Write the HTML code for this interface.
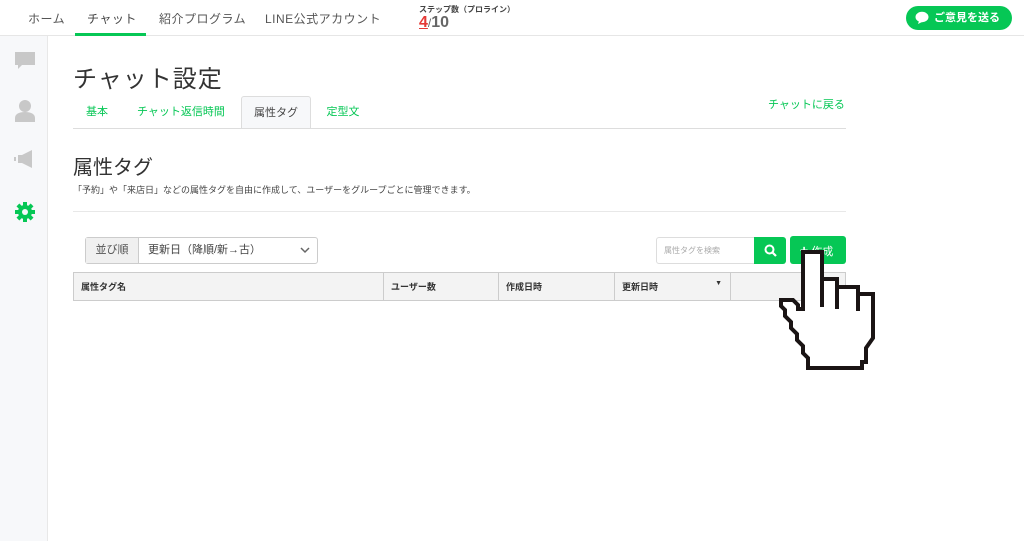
<!DOCTYPE html>
<html><head><meta charset="utf-8"><style>
*{box-sizing:border-box;margin:0;padding:0}
body{width:1024px;height:541px;overflow:hidden;background:#fff;font-family:"Liberation Sans","Noto Sans CJK JP",sans-serif;color:#333;position:relative}
.top{position:absolute;left:0;top:0;width:1024px;height:36px;border-bottom:1px solid #e6e6e6;background:#fff}
.nav{position:absolute;top:10px;font-size:12px;color:#555;letter-spacing:0.5px}
.side{position:absolute;left:0;top:36px;width:48px;height:505px;background:#f7f8fa;border-right:1px solid #e8e8e8}
.abs{position:absolute}
.tab{position:absolute;top:96px;height:33px;font-size:11px;color:#06c755;line-height:33px;text-align:center}
th{font-size:9px;font-weight:bold;text-align:left;padding-left:7px;border:1px solid #ccc;background:#f3f3f3;height:28px}
</style></head><body>
<div class="top">
<div class="nav" style="left:28px">ホーム</div>
<div class="nav" style="left:87px;color:#444">チャット</div>
<div class="abs" style="left:75px;top:33px;width:71px;height:3px;background:#06c755"></div>
<div class="nav" style="left:159px">紹介プログラム</div>
<div class="nav" style="left:265px">LINE公式アカウント</div>
<div class="abs" style="left:419px;top:4px;font-size:8px;font-weight:bold;color:#444">ステップ数（プロライン）</div>
<div class="abs" style="left:419px;top:14px;font-size:16px;font-weight:bold;color:#666"><span style="color:#e53935;text-decoration:underline">4</span><span style="font-weight:normal;font-size:12px">/</span>10</div>
<div class="abs" style="left:906px;top:6px;width:106px;height:24px;border-radius:12px;background:#06c755;color:#fff;font-size:11px;font-weight:bold;line-height:24px;padding-left:28px">ご意見を送る
<svg class="abs" style="left:9px;top:5px" width="14" height="14" viewBox="0 0 14 14"><ellipse cx="7" cy="6" rx="6.5" ry="5.2" fill="#fff"/><path d="M4 10l-1 3 4-2z" fill="#fff"/></svg></div>
</div>
<div class="side">
<svg class="abs" style="left:15px;top:16px" width="20" height="18" viewBox="0 0 20 18"><path d="M0 0h20v13H7l-4 4v-4H0z" fill="#c8c8c8"/></svg>
<svg class="abs" style="left:15px;top:64px" width="20" height="22" viewBox="0 0 20 22"><circle cx="10" cy="6" r="6" fill="#c8c8c8"/><path d="M0 22v-4c0-4 4-6 10-6s10 2 10 6v4z" fill="#c8c8c8"/></svg>
<svg class="abs" style="left:13px;top:114px" width="22" height="18" viewBox="0 0 22 18"><path d="M5 5h4l10-5v18l-10-5H5z M1 7h2v4H1z" fill="#c8c8c8"/></svg>
<svg class="abs" style="left:15px;top:166px" width="20" height="20" viewBox="0 0 20 20"><g fill="#06c755"><circle cx="10" cy="10" r="7"/><rect x="8" y="0" width="4" height="20"/><rect x="0" y="8" width="20" height="4"/><rect x="8" y="0" width="4" height="20" transform="rotate(45 10 10)"/><rect x="8" y="0" width="4" height="20" transform="rotate(-45 10 10)"/></g><circle cx="10" cy="10" r="3" fill="#f7f8fa"/></svg>
</div>
<div class="abs" style="left:73px;top:59px;font-size:24px;color:#333;letter-spacing:1px">チャット設定</div>
<div class="tab" style="left:73px;width:48px">基本</div>
<div class="tab" style="left:126px;width:110px">チャット返信時間</div>
<div class="tab" style="left:241px;width:70px;color:#444;background:#f7f8fa;border:1px solid #ddd;border-bottom:none;border-radius:3px 3px 0 0">属性タグ</div>
<div class="tab" style="left:315px;width:56px">定型文</div>
<div class="abs" style="left:768px;top:96px;font-size:11px;color:#06c755">チャットに戻る</div>
<div class="abs" style="left:73px;top:128px;width:773px;height:1px;background:#ddd"></div>
<div class="abs" style="left:73px;top:151px;font-size:20px;color:#333">属性タグ</div>
<div class="abs" style="left:73px;top:183px;font-size:9px;color:#444">「予約」や「来店日」などの属性タグを自由に作成して、ユーザーをグループごとに管理できます。</div>
<div class="abs" style="left:73px;top:211px;width:773px;height:1px;background:#e8e8e8"></div>
<div class="abs" style="left:85px;top:237px;width:233px;height:27px;border:1px solid #ccc;border-radius:3px;font-size:11px;line-height:25px">
<span style="display:inline-block;width:53px;background:#f0f0f0;border-right:1px solid #ccc;text-align:center;color:#555">並び順</span><span style="padding-left:9px;color:#444">更新日（降順/新→古）</span>
<svg class="abs" style="right:7px;top:9px" width="10" height="7" viewBox="0 0 10 7"><path d="M1 1l4 4 4-4" stroke="#666" stroke-width="1.5" fill="none"/></svg></div>
<div class="abs" style="left:656px;top:237px;width:100px;height:27px;border:1px solid #ddd;border-radius:3px 0 0 3px;font-size:8px;color:#aaa;line-height:25px;padding-left:7px">属性タグを検索</div>
<div class="abs" style="left:754px;top:237px;width:32px;height:27px;background:#06c755;border-radius:0 3px 3px 0">
<svg class="abs" style="left:10px;top:7px" width="13" height="13" viewBox="0 0 13 13"><circle cx="5.5" cy="5.5" r="4" stroke="#fff" stroke-width="2" fill="none"/><path d="M8.5 8.5l3.5 3.5" stroke="#fff" stroke-width="2.2"/></svg></div>
<div class="abs" style="left:790px;top:236px;width:56px;height:28px;background:#06c755;border-radius:3px;color:#fff;font-size:11px;line-height:28px;padding-left:10px"><b style="font-size:14px">+</b> 作成</div>
<table class="abs" style="left:73px;top:272px;width:773px;border-collapse:collapse">
<tr><th style="width:310px">属性タグ名</th><th style="width:115px">ユーザー数</th><th style="width:116px">作成日時</th><th style="width:116px">更新日時 <span style="float:right;margin-right:8px;font-size:7px">▼</span></th><th></th></tr></table>
<svg class="abs" style="left:775px;top:245px" width="110" height="130" viewBox="775 245 110 130">
<path d="M803 252H822V279H837V287H858V294H873V338L866 348V362H862V368H808V358L803 353V346L797 340V334L791 328V322L785 316V310L781 306V300H793L798 305V309H803Z" fill="#fff" stroke="#1a1414" stroke-width="4"/>
<path d="M822 279v28M837 287v22M858 294v17" stroke="#1a1414" stroke-width="4"/>
</svg>
</body></html>
